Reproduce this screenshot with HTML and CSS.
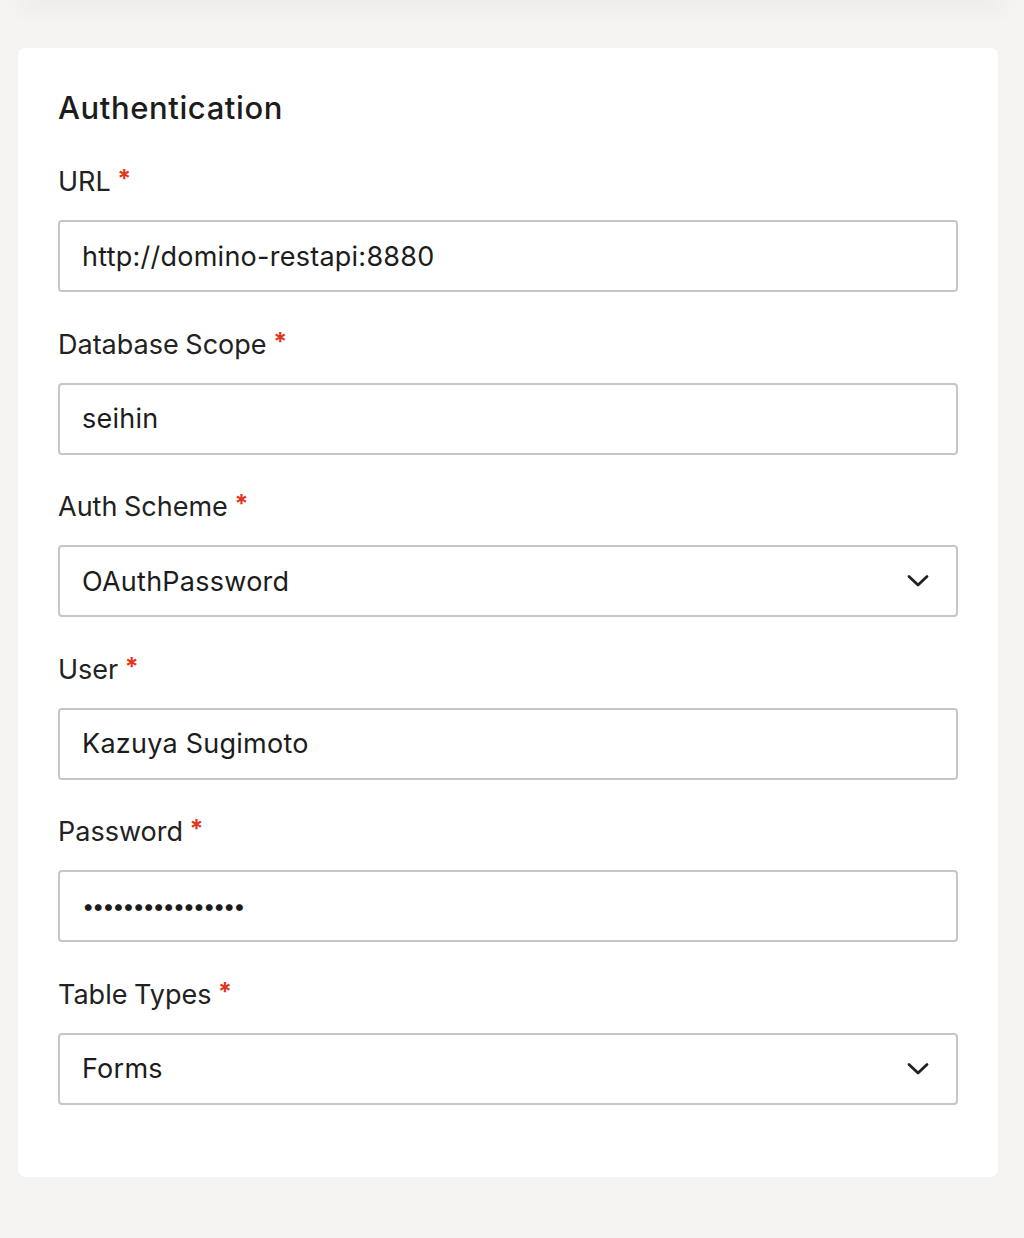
FILE: index.html
```html
<!DOCTYPE html>
<html lang="en">
<head>
    <meta charset="UTF-8">
    <meta name="viewport" content="width=device-width, initial-scale=1.0">
    <title>Authentication</title>
    <link rel="stylesheet" href="styles.css">
</head>
<body>
    <div class="topbar"></div>
    <div class="card">
        <h2>Authentication</h2>
        <div class="field">
            <label for="url">URL <span class="req">*</span></label>
            <input type="text" id="url" class="box" value="http://domino-restapi:8880">
        </div>
        <div class="field">
            <label for="scope">Database Scope <span class="req">*</span></label>
            <input type="text" id="scope" class="box" value="seihin">
        </div>
        <div class="field">
            <label>Auth Scheme <span class="req">*</span></label>
            <div class="box select">
                <span>OAuthPassword</span>
                <svg width="24" height="14" viewBox="0 0 24 14"><path d="M3 2.5 L12 11 L21 2.5" fill="none" stroke="#222" stroke-width="2.8" stroke-linecap="round" stroke-linejoin="round"/></svg>
            </div>
        </div>
        <div class="field">
            <label for="user">User <span class="req">*</span></label>
            <input type="text" id="user" class="box" value="Kazuya Sugimoto">
        </div>
        <div class="field">
            <label>Password <span class="req">*</span></label>
            <div class="box pass">&bull;&bull;&bull;&bull;&bull;&bull;&bull;&bull;&bull;&bull;&bull;&bull;&bull;&bull;&bull;&bull;</div>
        </div>
        <div class="field">
            <label>Table Types <span class="req">*</span></label>
            <div class="box select">
                <span>Forms</span>
                <svg width="24" height="14" viewBox="0 0 24 14"><path d="M3 2.5 L12 11 L21 2.5" fill="none" stroke="#222" stroke-width="2.8" stroke-linecap="round" stroke-linejoin="round"/></svg>
            </div>
        </div>
    </div>
</body>
</html>
```
FILE: styles.css
```css
body {
    font-family: Inter, "Noto Sans", sans-serif;
    background-color: #f5f4f2;
    margin: 0;
    padding: 0;
    color: #1c1c1c;
}
.topbar {
    height: 0;
    margin: 0 30px;
    box-shadow: 0 0 22px 10px rgba(0, 0, 0, 0.04);
}
.card {
    background-color: #fff;
    border-radius: 7px;
    margin: 48px 26px 0 18px;
    padding: 40px 40px 72px 40px;
    box-shadow: 0 1px 3px rgba(0, 0, 0, 0.03);
}
h2 {
    font-size: 31px;
    font-weight: 500;
    letter-spacing: 0.6px;
    line-height: 40px;
    margin: 0 0 36px 0;
}
.field {
    display: flex;
    flex-direction: column;
    margin-bottom: 34.6px;
}
.field:last-child {
    margin-bottom: 0;
}
label {
    font-size: 27px;
    letter-spacing: 0;
    word-spacing: -1px;
    line-height: 36px;
    margin-bottom: 20px;
    color: #222;
}
.req {
    color: #e2361f;
    font-weight: 700;
    font-size: 25px;
    vertical-align: top;
    position: relative;
    top: -3px;
}
.box {
    box-sizing: border-box;
    height: 72px;
    width: 100%;
    border: 2px solid #c6c6c6;
    border-radius: 4px;
    padding: 0 22px;
    font-family: inherit;
    font-size: 27px;
    letter-spacing: 0.25px;
    color: #1c1c1c;
    background: #fff;
    outline: none;
}
.select {
    display: flex;
    align-items: center;
    justify-content: space-between;
    padding-right: 26px;
}
.pass {
    display: flex;
    align-items: center;
    font-size: 22px;
    letter-spacing: -2.3px;
}
```
